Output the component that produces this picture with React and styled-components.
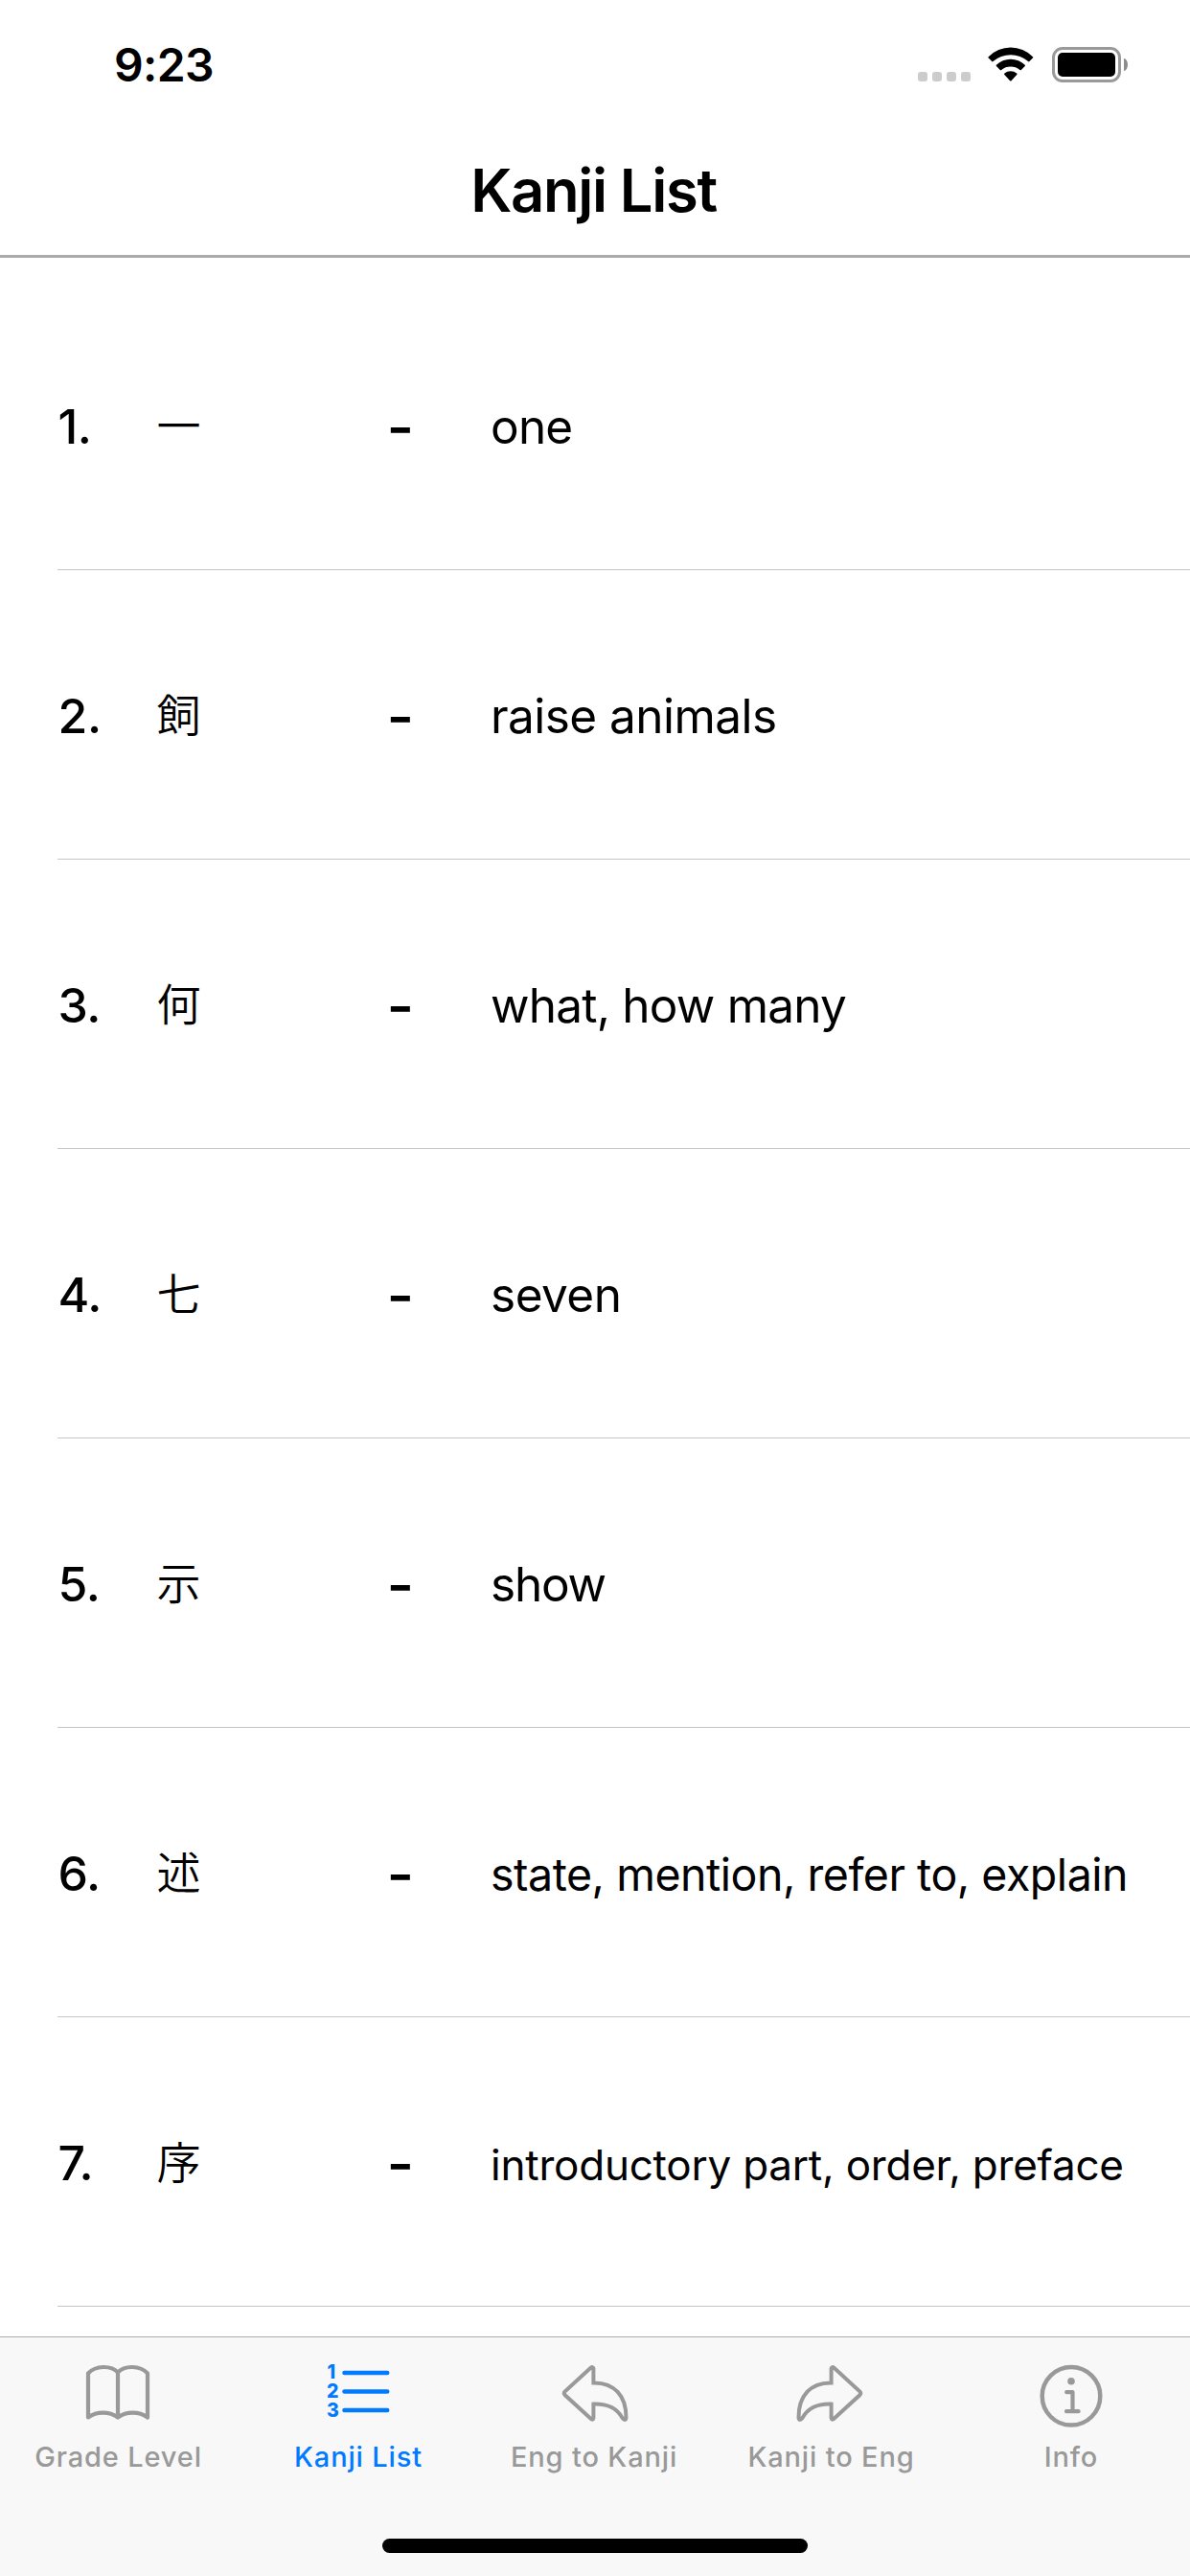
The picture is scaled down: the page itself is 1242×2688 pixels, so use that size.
import React from "react";
import styled, { createGlobalStyle } from "styled-components";

const GlobalStyle = createGlobalStyle`
  *, *::before, *::after { box-sizing: border-box; }
  body {
    margin: 0;
    background: #fff;
    color: #000;
    font-family: Inter, "Noto Sans CJK JP", sans-serif;
  }
`;

const Screen = styled.div`
  width: 1242px;
  height: 2688px;
  display: flex;
  flex-direction: column;
  overflow: hidden;
  background: #fff;
`;

const StatusBar = styled.div`
  flex: none;
  height: 132px;
  padding: 43px 65px 0 119px;
  display: flex;
  justify-content: space-between;
  align-items: flex-start;
`;

const Clock = styled.span`
  margin-top: 1px;
  font-size: 48px;
  line-height: 48px;
  font-weight: 600;
  letter-spacing: -0.6px;
`;

const Indicators = styled.div`
  display: flex;
  align-items: flex-start;
  padding-top: 6px;
`;

const SignalDots = styled.div`
  display: flex;
  gap: 5px;
  margin: 26px 18px 0 0;
`;

const SignalDot = styled.span`
  width: 10px;
  height: 10px;
  border-radius: 3px;
  background: #ccc;
`;

const WifiGlyph = styled.svg`
  width: 48px;
  height: 36px;
  margin-right: 19px;
`;

const BatteryCase = styled.div`
  width: 72px;
  height: 37px;
  padding: 3px;
  border: 3px solid #999;
  border-radius: 11px;
  display: flex;
`;

const BatteryLevel = styled.span`
  flex: 1;
  border-radius: 5px;
  background: #000;
`;

const BatteryNub = styled.span`
  width: 4px;
  height: 13px;
  margin: 12px 0 0 3px;
  border-radius: 0 4px 4px 0 / 0 6.5px 6.5px 0;
  background: #8c8c8c;
`;

const NavBar = styled.header`
  flex: none;
  height: 137px;
  border-bottom: 3px solid #aaa;
  display: flex;
  align-items: center;
  justify-content: center;
`;

const NavTitle = styled.h1`
  margin: 0 3px 0 0;
  font-size: 61.5px;
  line-height: 62px;
  font-weight: 600;
  letter-spacing: -1.37px;
`;

const List = styled.ul`
  flex: 1;
  min-height: 0;
  margin: 0;
  padding: 24px 0 0 60px;
  list-style: none;
  overflow: hidden;
`;

const Row = styled.li`
  height: 302px;
  padding-top: 120px;
  border-bottom: 1px solid #c6c6c6;
  display: grid;
  grid-template-columns: 103.5px 240px 108.5px 1fr;
  align-items: baseline;
  align-content: start;
`;

const Ordinal = styled.span`
  margin-top: 2px;
  padding-left: 0.5px;
  font-size: 50px;
  line-height: 60px;
  font-weight: 500;
  letter-spacing: -0.4px;
`;

const Character = styled.span`
  align-self: start;
  margin-top: -2px;
  font-family: "Noto Sans CJK JP", sans-serif;
  font-size: 46px;
  line-height: 60px;
  font-weight: 350;
`;

const Dash = styled.span`
  align-self: start;
  margin-top: 8px;
  font-size: 62px;
  line-height: 50px;
  font-weight: 500;
`;

const Meaning = styled.span`
  font-size: ${(p) => p.$size}px;
  line-height: 60px;
  letter-spacing: ${(p) => p.$tracking}px;
  white-space: nowrap;
`;

const TabBar = styled.footer`
  flex: none;
  height: 250px;
  border-top: 1px solid #adadad;
  background: #f8f8f8;
  display: flex;
  flex-direction: column;
  justify-content: space-between;
  align-items: center;
`;

const Tabs = styled.nav`
  width: 100%;
  display: grid;
  grid-template-columns: 246px 255px 237px 258px 243px;
`;

const Tab = styled.div`
  padding-top: 27px;
  display: flex;
  flex-direction: column;
  align-items: center;
  color: ${(p) => (p.$active ? "#007aff" : "#999")};
`;

const TabGlyph = styled.svg`
  width: 72px;
  height: 68px;
  overflow: visible;
  fill: none;
  stroke: currentColor;
  stroke-width: ${(p) => p.$weight || 4};
  stroke-linecap: round;
  stroke-linejoin: ${(p) => p.$join || "round"};
  transform: ${(p) => (p.$flip ? "scaleX(-1)" : "none")};
`;

const Numeral = styled.text`
  font-family: Inter, sans-serif;
  font-size: 19.5px;
  font-weight: 800;
  fill: currentColor;
  stroke: none;
`;

const TabLabel = styled.span`
  margin-top: 15px;
  padding-left: 1px;
  font-size: 29px;
  line-height: 30px;
  font-weight: 450;
  letter-spacing: 0.85px;
  white-space: nowrap;
`;

const HomeIndicator = styled.div`
  width: 444px;
  height: 15px;
  margin-bottom: 24px;
  border-radius: 8px;
  background: #000;
`;

const BookIcon = () => (
  <TabGlyph viewBox="0 0 72 68" $weight={4.2}>
    <path d="M36 9.5C29 2 13 2 5 10.5V56.5C14 50 27 50 36 56.5C45 50 58 50 67 56.5V10.5C59 2 43 2 36 9.5V56.5" />
  </TabGlyph>
);

const NumberedListIcon = () => (
  <TabGlyph viewBox="0 0 72 68" $weight={4.6}>
    <Numeral x="3.6" y="16.4">1</Numeral>
    <Numeral x="3" y="36">2</Numeral>
    <Numeral x="3" y="55.6">3</Numeral>
    <path d="M21.5 10H66.2M21.5 29.5H66.2M21.5 49H66.2" />
  </TabGlyph>
);

const ArrowIcon = ({ flip }) => (
  <TabGlyph viewBox="0 0 72 68" $join="miter" $flip={flip}>
    <path d="M35.4 20.4V5.5Q34.8 3 32.5 4.8L5.5 29.6Q4 31.3 5.5 33L32.5 57.8Q34.8 59.8 35.4 57V42.6C49 42.2 59 45.5 65.5 57Q68.5 61 69.5 57C69.8 34 57 20 35.4 20.4Z" />
  </TabGlyph>
);

const InfoIcon = () => (
  <TabGlyph viewBox="0 0 72 68" $weight={4.2}>
    <circle cx="36" cy="34.3" r="30.3" strokeWidth="4.5" />
    <circle cx="36" cy="18.7" r="3.8" fill="currentColor" stroke="none" />
    <path d="M31.2 30.2H37.5V50.2M31 50.2H43.6" />
  </TabGlyph>
);

const WifiIcon = () => (
  <WifiGlyph viewBox="0 0 48 36">
    <path d="M0.7 10.2A32.3 32.3 0 0 1 46.9 10.2Q47.6 10.9 46.9 11.6L43.4 15.1Q42.8 15.7 42.1 15.1A28 28 0 0 0 5.5 15.1Q4.8 15.7 4.2 15.1L0.7 11.6Q0 10.9 0.7 10.2Z" />
    <path d="M8.9 18.7A21.4 21.4 0 0 1 38.7 18.7Q39.3 19.3 38.7 20L34.8 24Q34.2 24.6 33.5 24A15.4 15.4 0 0 0 14.1 24Q13.4 24.6 12.8 24L8.9 20Q8.3 19.3 8.9 18.7Z" />
    <path d="M17.4 27.6A10 10 0 0 1 30.2 27.6Q31 28.3 30.2 29.1L24.5 35.2Q23.8 35.9 23.1 35.2L17.4 29.1Q16.6 28.3 17.4 27.6Z" />
  </WifiGlyph>
);

const entries = [
  { kanji: "一", meaning: "one", size: 49.5, tracking: -0.8 },
  { kanji: "飼", meaning: "raise animals", size: 49.5, tracking: -0.55 },
  { kanji: "何", meaning: "what, how many", size: 49.5, tracking: -0.78 },
  { kanji: "七", meaning: "seven", size: 49.5, tracking: -0.5 },
  { kanji: "示", meaning: "show", size: 49.5, tracking: -1.2 },
  { kanji: "述", meaning: "state, mention, refer to, explain", size: 46.5, tracking: -0.47 },
  { kanji: "序", meaning: "introductory part, order, preface", size: 44, tracking: -0.22 },
];

const tabs = [
  { label: "Grade Level", icon: <BookIcon /> },
  { label: "Kanji List", icon: <NumberedListIcon />, active: true },
  { label: "Eng to Kanji", icon: <ArrowIcon /> },
  { label: "Kanji to Eng", icon: <ArrowIcon flip /> },
  { label: "Info", icon: <InfoIcon /> },
];

export default function App() {
  return (
    <Screen>
      <GlobalStyle />
      <StatusBar>
        <Clock>9:23</Clock>
        <Indicators>
          <SignalDots>
            <SignalDot />
            <SignalDot />
            <SignalDot />
            <SignalDot />
          </SignalDots>
          <WifiIcon />
          <BatteryCase>
            <BatteryLevel />
          </BatteryCase>
          <BatteryNub />
        </Indicators>
      </StatusBar>
      <NavBar>
        <NavTitle>Kanji List</NavTitle>
      </NavBar>
      <List>
        {entries.map((e, i) => (
          <Row key={e.kanji}>
            <Ordinal>{i + 1}.</Ordinal>
            <Character lang="ja">{e.kanji}</Character>
            <Dash>-</Dash>
            <Meaning $size={e.size} $tracking={e.tracking}>{e.meaning}</Meaning>
          </Row>
        ))}
      </List>
      <TabBar>
        <Tabs>
          {tabs.map((t) => (
            <Tab key={t.label} $active={t.active}>
              {t.icon}
              <TabLabel>{t.label}</TabLabel>
            </Tab>
          ))}
        </Tabs>
        <HomeIndicator />
      </TabBar>
    </Screen>
  );
}
